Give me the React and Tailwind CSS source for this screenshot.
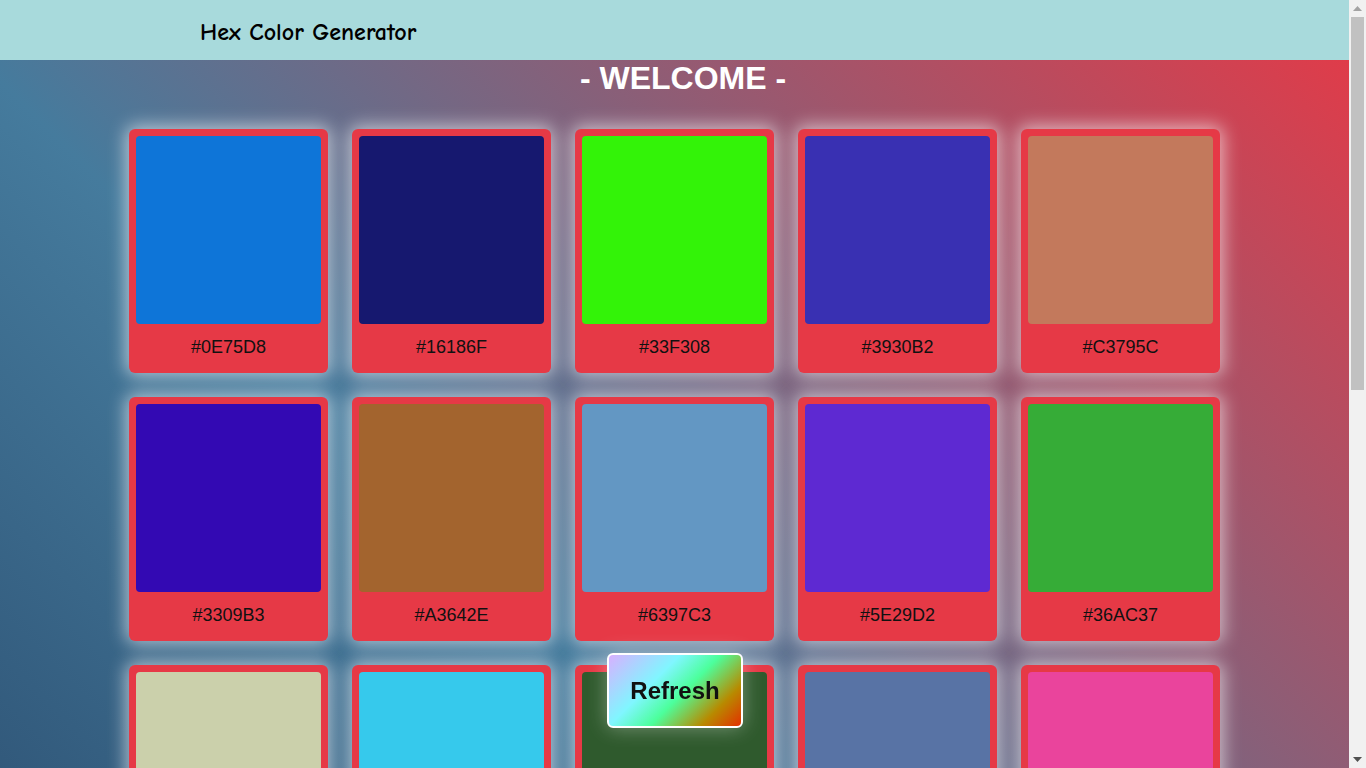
const COLORS = [
  '#0E75D8', '#16186F', '#33F308', '#3930B2', '#C3795C',
  '#3309B3', '#A3642E', '#6397C3', '#5E29D2', '#36AC37',
  '#CBD0AB', '#36C9EC', '#2F5A2D', '#5873A5', '#EA449C',
  '#7D2E91', '#F0B43C', '#1C8F7A', '#B8E0F2', '#5A3D1F',
  '#D94F6B', '#4E9E2A', '#2B4C9C', '#E7D86A', '#8C1F3F',
];

function ColorCard({ hex }) {
  return (
    <div className="w-[199px] h-[244px] bg-[#e63946] rounded-md p-[7px] pb-0 flex flex-col shadow-[0_0_18px_3px_rgba(255,255,255,0.6)]">
      <div className="h-[188px] rounded" style={{ background: hex }} />
      <div className="flex-1 flex items-center justify-center pb-[2px] text-[18px] text-[#111] font-['Liberation_Sans',Arial,sans-serif]">
        {hex}
      </div>
    </div>
  );
}

// browser scrollbar as it appears in the shot
function ScrollBar() {
  return (
    <div className="fixed top-0 right-0 w-[17px] h-screen bg-[#f1f1f1] flex flex-col items-center">
      <div className="h-[17px] w-full flex items-center justify-center">
        <svg width="9" height="5" viewBox="0 0 9 5"><path d="M4.5 0L9 5H0z" fill="#a3a3a3" /></svg>
      </div>
      <div className="w-[13px] h-[373px] bg-[#c1c1c1]" />
      <div className="flex-1" />
      <div className="h-[17px] w-full flex items-center justify-center">
        <svg width="9" height="5" viewBox="0 0 9 5"><path d="M0 0H9L4.5 5z" fill="#505050" /></svg>
      </div>
    </div>
  );
}

export default function App() {
  return (
    <div className="w-[1349px] min-h-[1512px] bg-[linear-gradient(45deg,#1d3557,#457b9d,#e63946)] font-['Liberation_Sans',Arial,sans-serif]">
      {/* Header */}
      <header className="h-[60px] bg-[#a8dadc] flex items-center pl-[200px] pt-[4px]">
        <span className="text-[24px] font-bold text-black font-['Comic_Sans_MS','Comic_Neue','DejaVu_Sans',sans-serif]">
          Hex Color Generator
        </span>
      </header>

      <h1 className="pl-[17px] text-center text-white font-bold text-[32px] leading-[37px] m-0">- WELCOME -</h1>

      {/* Grid of colours */}
      <div className="mt-8 flex justify-center pb-[67px]">
        <div className="grid grid-cols-5 gap-6">
          {COLORS.map((c) => (
            <ColorCard key={c} hex={c} />
          ))}
        </div>
      </div>

      {/* Refresh */}
      <button className="fixed bottom-[40px] left-[675px] -translate-x-1/2 w-[136px] h-[75px] rounded-md border-2 border-white bg-[linear-gradient(135deg,#d8b0ff_0%,#80f6ff_35%,#4cff9c_55%,#b88a00_80%,#e33000_100%)] text-[#111] font-bold text-[24px] shadow-[0_0_20px_rgba(255,255,255,0.35)]">
        Refresh
      </button>

      <ScrollBar />
    </div>
  );
}
